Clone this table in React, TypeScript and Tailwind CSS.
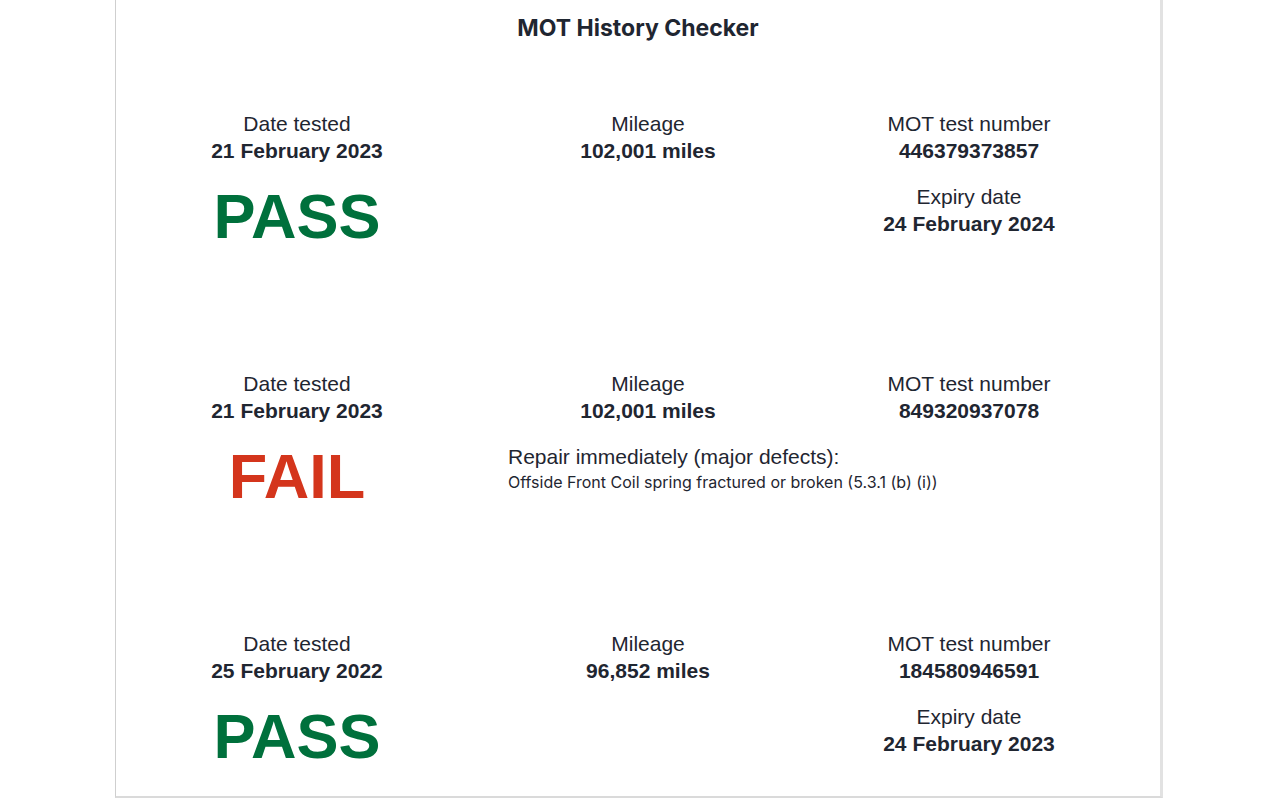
const records = [
  {
    date: "21 February 2023",
    mileage: "102,001 miles",
    number: "446379373857",
    result: "PASS",
    expiry: "24 February 2024",
    defects: [] as string[],
  },
  {
    date: "21 February 2023",
    mileage: "102,001 miles",
    number: "849320937078",
    result: "FAIL",
    expiry: "",
    defects: ["Offside Front Coil spring fractured or broken (5.3.1 (b) (i))"],
  },
  {
    date: "25 February 2022",
    mileage: "96,852 miles",
    number: "184580946591",
    result: "PASS",
    expiry: "24 February 2023",
    defects: [] as string[],
  },
];

const Field = ({ label, value }: { label: string; value: string }) => (
  <div className="text-center text-[21px] leading-[27px] text-[#1f2631]">
    <div>{label}</div>
    <div className="font-bold">{value}</div>
  </div>
);

const Record = ({ r }: any) => {
  const pass = r.result === "PASS";
  return (
    <div className="h-[260px] grid grid-cols-[282px_280px_222px] gap-x-[70px] gap-y-[19px] content-start">
      <Field label="Date tested" value={r.date} />
      <Field label="Mileage" value={r.mileage} />
      <Field label="MOT test number" value={r.number} />

      <div
        className={
          "mt-[2px] text-center text-[63px] leading-[63px] font-bold " +
          (pass ? "text-[#00703c]" : "text-[#d4351c]")
        }
      >
        {r.result}
      </div>
      <div className="text-[#1f2631] whitespace-nowrap">
        {r.defects.length > 0 && (
          <>
            <div className="text-[21px] leading-[27px]">Repair immediately (major defects):</div>
            {r.defects.map((d: string) => (
              <div key={d} className="text-[16px] leading-[25px] font-['Inter',sans-serif]">
                {d}
              </div>
            ))}
          </>
        )}
      </div>
      <div>{r.expiry && <Field label="Expiry date" value={r.expiry} />}</div>
    </div>
  );
};

export default function App() {
  return (
    <div className="h-[800px] w-[1280px] overflow-hidden bg-white font-['Liberation_Sans',Arial,sans-serif]">
      <div className="ml-[115px] h-[798px] w-[1048px] bg-white border-l border-[#cfcfcf] border-r-[3px] border-r-[#e2e2e2] border-b-2 border-b-[#dadada] pt-[14px]">
        <h1 className="text-center text-[23px] leading-[28px] font-bold text-[#1f2631] font-['Inter',sans-serif]">
          MOT History Checker
        </h1>
        <div className="mt-[68px] ml-[40px]">
          {records.map((r) => (
            <Record key={r.number} r={r} />
          ))}
        </div>
      </div>
    </div>
  );
}
